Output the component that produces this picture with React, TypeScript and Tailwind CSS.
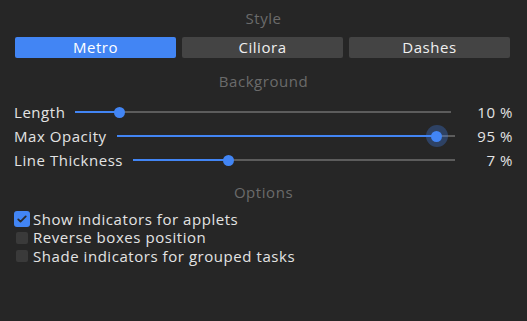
const styles = ["Metro", "Ciliora", "Dashes"];

const sliders = [
  { label: "Length", value: "10 %", pos: 0.117, active: false, wide: true },
  { label: "Max Opacity", value: "95 %", pos: 0.946, active: true, wide: false },
  { label: "Line Thickness", value: "7 %", pos: 0.296, active: false, wide: false },
];

const options = [
  { label: "Show indicators for applets", checked: true },
  { label: "Reverse boxes position", checked: false },
  { label: "Shade indicators for grouped tasks", checked: false },
];

function SectionTitle({ children }: { children: string }) {
  return (
    <div className="text-center text-[15px] leading-5 text-[#6b6b6b]">{children}</div>
  );
}

export default function App() {
  return (
    <div
      className="w-[527px] h-[321px] bg-[#262626] px-[14px] pt-[8px] text-[#e3e3e3] tracking-[0.55px] overflow-hidden"
      style={{ fontFamily: "'Open Sans', 'Noto Sans', sans-serif" }}
    >
      <SectionTitle>Style</SectionTitle>

      <div className="mt-[9px] grid grid-cols-3 gap-[6px] pl-px pr-[3px]">
        {styles.map((s, i) => (
          <div
            key={s}
            className={
              i === 0
                ? "h-[21px] rounded-[2px] bg-[#4285f4] text-white text-[15px] leading-[21px] text-center"
                : "h-[21px] rounded-[2px] bg-[#444444] text-[#f0f0f0] text-[15px] leading-[21px] text-center"
            }
          >
            {s}
          </div>
        ))}
      </div>

      <div className="mt-[13px]">
        <SectionTitle>Background</SectionTitle>
      </div>

      <div className="mt-[9px] flex flex-col">
        {sliders.map((s) => (
          <div key={s.label} className="flex items-center h-6">
            <span className="text-[15px] leading-6 whitespace-nowrap">{s.label}</span>
            <div className="relative flex-1 ml-[10px] h-[2px] bg-[#5c5c5c]">
              <div
                className="absolute left-0 top-0 h-[2px] bg-[#4285f4]"
                style={{ width: `${s.pos * 100}%` }}
              />
              {s.active && (
                <div
                  className="absolute top-1/2 w-[22px] h-[22px] -ml-[11px] -mt-[11px] rounded-full bg-[#4285f4]/30"
                  style={{ left: `${s.pos * 100}%` }}
                />
              )}
              <div
                className="absolute top-1/2 w-[11px] h-[11px] -ml-[5.5px] -mt-[5.5px] rounded-full bg-[#4285f4]"
                style={{ left: `${s.pos * 100}%` }}
              />
            </div>
            <span
              className={
                s.wide
                  ? "w-[62px] text-right text-[15px] leading-6"
                  : "w-[58px] text-right text-[15px] leading-6"
              }
            >
              {s.value}
            </span>
          </div>
        ))}
      </div>

      <div className="mt-[10px]">
        <SectionTitle>Options</SectionTitle>
      </div>

      <div className="mt-[8px] flex flex-col">
        {options.map((o) => (
          <div key={o.label} className="flex items-center h-[18.5px]">
            <div className="w-4 h-4 flex items-center justify-center">
              {o.checked ? (
                <div className="w-4 h-4 rounded-[3px] bg-[#4285f4] flex items-center justify-center">
                  <svg viewBox="0 0 16 16" className="w-3 h-3">
                    <path
                      d="M3 8.5l3 3 7-7"
                      fill="none"
                      stroke="#2a2a2a"
                      strokeWidth="2.4"
                      strokeLinecap="round"
                      strokeLinejoin="round"
                    />
                  </svg>
                </div>
              ) : (
                <div className="w-3 h-3 rounded-[2px] bg-[#3a3a3a]" />
              )}
            </div>
            <span className="ml-[3px] text-[15px] leading-[19px]">{o.label}</span>
          </div>
        ))}
      </div>
    </div>
  );
}
